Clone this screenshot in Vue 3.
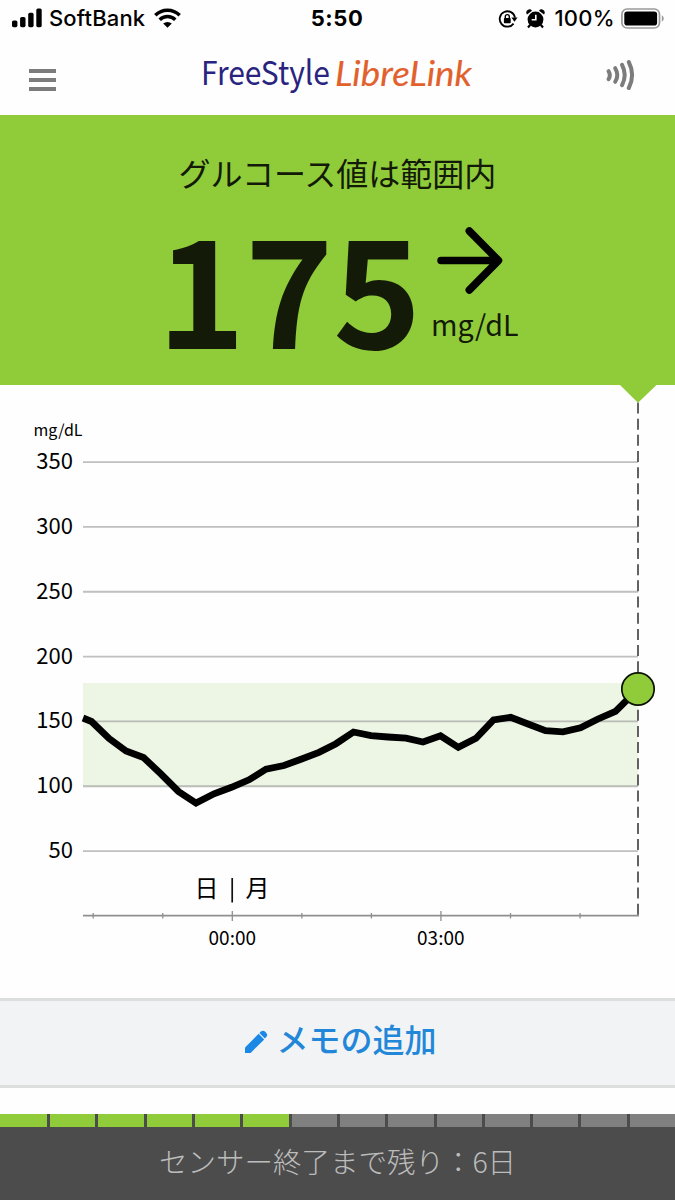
<template>
  <div class="screen">
    <div class="status-bar">
      <div class="status-left">
        <svg class="signal" width="31" height="20" viewBox="0 0 31 20">
          <rect x="0" y="12.5" width="5.4" height="6.7" rx="1.6" />
          <rect x="8.1" y="9" width="5.4" height="10.2" rx="1.6" />
          <rect x="16.2" y="4.8" width="5.4" height="14.4" rx="1.6" />
          <rect x="24.3" y="0.5" width="5.4" height="18.7" rx="1.6" />
        </svg>
        <span class="carrier">SoftBank</span>
        <svg class="wifi" width="27" height="20" viewBox="0 0 27 20">
          <path d="M1.3 7.3a17.2 17.2 0 0 1 24.4 0" />
          <path d="M5.7 11.8a11 11 0 0 1 15.6 0" />
          <path class="dot" d="M9.2 15.6a6.3 6.3 0 0 1 8.6 0L13.5 19.8z" />
        </svg>
      </div>
      <span class="clock">5:50</span>
      <div class="status-right">
        <svg class="lock" width="20" height="20" viewBox="0 0 20 20">
          <path class="ring" d="M15.6 14.6A7.7 7.7 0 1 1 17 8.6" />
          <path d="M13.4 8.5h6.2l-3.1 4.2z" />
          <rect x="5.9" y="9" width="6.8" height="5.2" rx="0.8" />
          <path class="shackle" d="M7.3 9.2V7.6a2 2 0 0 1 4 0v1.6" />
        </svg>
        <svg class="alarm" width="19" height="20" viewBox="0 0 19 20">
          <path d="M1 5.4A3 3 0 0 1 6 1.8zM18 5.4A3 3 0 0 0 13 1.8z" />
          <circle cx="9.5" cy="10.5" r="7.9" />
          <path class="legs" d="M4.3 15.8L2 18.4M14.7 15.8l2.3 2.6" />
          <path class="hands" d="M9.8 5.8v5H5.7" />
        </svg>
        <span class="percent">100%</span>
        <svg class="battery" width="44" height="22" viewBox="0 0 44 22">
          <rect class="shell" x="0.9" y="1" width="37.6" height="19" rx="5.2" />
          <rect x="3.3" y="3.5" width="32.8" height="14" rx="2.8" />
          <path class="cap" d="M40.8 7.2q2 1.2 2 3.3t-2 3.3z" />
        </svg>
      </div>
    </div>

    <header class="header">
      <button class="menu" aria-label="menu">
        <span></span>
        <span></span>
        <span></span>
      </button>
      <svg class="logo" width="280" height="62" viewBox="0 0 280 62">
        <text class="logo-free" x="1" y="44" textLength="129" lengthAdjust="spacingAndGlyphs">FreeStyle</text>
        <text class="logo-libre" x="135" y="44.5" textLength="137" lengthAdjust="spacingAndGlyphs">LibreLink</text>
      </svg>
      <svg class="scan" width="30" height="32" viewBox="0 0 30 32">
        <path d="M2.6 12.2q2.4 4 0 8" />
        <path d="M9.2 9.2q4.2 6.8 0 13.6" />
        <path d="M16 5.8q5.4 10.2 0 20.4" />
        <path d="M22.8 3q6.6 13 0 26" />
      </svg>
    </header>

    <section class="reading">
      <h1 class="message">グルコース値は範囲内</h1>
      <div class="value-row">
        <span class="value">175</span>
        <div class="trend">
          <svg width="66" height="68" viewBox="0 0 66 68">
            <path d="M4 33.5H61M32.3 4L61.5 33.5L32.3 63" />
          </svg>
          <span class="unit">mg/dL</span>
        </div>
      </div>
    </section>

    <svg class="chart" width="675" height="613" viewBox="0 385 675 613">
      <rect class="target" x="83" y="683" width="555" height="103.5" />
      <g v-for="level in levels" :key="level">
        <line class="grid" x1="83" x2="638" :y1="yOf(level)" :y2="yOf(level)" />
        <text class="level" x="73" :y="yOf(level) + 7">{{ level }}</text>
      </g>
      <text class="chart-unit" x="33.5" y="436">mg/dL</text>

      <line class="axis" x1="83" x2="639" y1="915.7" y2="915.7" />
      <line v-for="h in hours" :key="h" class="tick" :x1="xOf(h)" :x2="xOf(h)"
        :y1="h % 3 ? 913 : 911" :y2="h % 3 ? 918.5 : 921" />
      <text class="hour" x="232.3" y="945">00:00</text>
      <text class="hour" x="440.8" y="945">03:00</text>

      <text class="day" x="206.5" y="896.5">日</text>
      <line class="day-line" x1="232.2" x2="232.2" y1="878" y2="902.5" />
      <text class="day" x="257.5" y="896.5">月</text>

      <polyline class="glucose" :points="glucosePoints" />
      <line class="now" x1="638" x2="638" y1="402.5" y2="916" />
      <path class="pointer" d="M620 385H656.5L638 402.8z" />
      <circle class="current" cx="638" cy="689" r="16.2" />
    </svg>

    <button class="note">
      <svg width="24" height="24" viewBox="0 0 24 24">
        <path d="M1 17.4L14.6 3.8L20.2 9.4L6.6 23H1z" />
        <path d="M15.4 3l1.7-1.5q2-1.7 4.1.3l.9.9q2 2.1.3 4.1L20.9 8.5z" />
      </svg>
      <span>メモの追加</span>
    </button>

    <footer class="sensor">
      <div class="days">
        <span v-for="day in 14" :key="day" class="day-block" :class="{ active: day <= daysLeft }"></span>
      </div>
      <p class="sensor-text">センサー終了まで残り：{{ daysLeft }}日</p>
    </footer>
  </div>
</template>

<script setup>
import { computed } from 'vue'

const daysLeft = 6
const levels = [350, 300, 250, 200, 150, 100, 50]
const hours = [-2, -1, 0, 1, 2, 3, 4, 5]

// Trace of the last eight hours, one point every 15 minutes
const readings = [
  [83, 718], [91.5, 721.5], [109, 738.5], [126, 751], [143.5, 757.5], [161, 774],
  [178.5, 791.5], [196, 803], [214, 793.8], [231.5, 787.3], [249, 779.8], [266, 769.2],
  [284, 765.5], [301, 759.3], [319, 752.3], [336, 743.7], [353.5, 732], [371, 735.7],
  [388, 737], [406, 738.2], [423, 742], [440.5, 735.8], [458.3, 747.3], [476, 738.3],
  [493.5, 720], [510.7, 717.3], [528, 724], [545.5, 730.7], [563, 731.8], [580.5, 727.7],
  [598, 719], [615.5, 711.3], [638, 689]
]

const glucosePoints = computed(() => readings.map((p) => p.join(',')).join(' '))

function xOf(hour) {
  return 232.3 + hour * 69.55
}

function yOf(level) {
  return 915.9 - level * 1.2967
}
</script>

<style>
body {
  margin: 0;
  background: #fff;
}
</style>

<style scoped>
.screen {
  width: 675px;
  height: 1200px;
  display: flex;
  flex-direction: column;
  overflow: hidden;
  background: #fefefe;
  color: #000;
  font-family: "Noto Sans CJK JP", sans-serif;
}

button {
  border: 0;
  padding: 0;
  background: none;
  font-family: inherit;
}

.status-bar {
  height: 37px;
  box-sizing: border-box;
  padding: 0 10px 0 12px;
  display: grid;
  grid-template-columns: 1fr auto 1fr;
  align-items: center;
  font-family: Inter, sans-serif;
  font-size: 22px;
  line-height: 37px;
  font-weight: 500;
}

.status-left,
.status-right {
  display: flex;
  align-items: center;
}

.status-right {
  justify-content: flex-end;
}

.signal {
  margin-top: -2px;
}

.carrier {
  margin-left: 6px;
  letter-spacing: 0.15px;
}

.wifi {
  margin-left: 9px;
  margin-top: -1px;
}

.wifi path {
  fill: none;
  stroke: #000;
  stroke-width: 3.4;
}

.wifi .dot {
  fill: #000;
  stroke: none;
}

.clock {
  margin-right: 3px;
  font-weight: 700;
  letter-spacing: 0.6px;
}

.lock .ring,
.lock .shackle {
  fill: none;
  stroke: #000;
  stroke-width: 1.8;
}

.lock .shackle {
  stroke-width: 1.4;
}

.alarm {
  margin-left: 8px;
}

.alarm .legs {
  stroke: #000;
  stroke-width: 2.2;
}

.alarm .hands {
  fill: none;
  stroke: #fff;
  stroke-width: 1.6;
}

.percent {
  margin-left: 9px;
  margin-right: 6px;
  letter-spacing: 0.3px;
}

.battery .shell {
  fill: none;
  stroke: #999;
  stroke-width: 1.7;
}

.battery .cap {
  fill: #999;
}

.header {
  height: 78px;
  box-sizing: border-box;
  padding: 0 39px 0 29px;
  display: flex;
  align-items: flex-start;
}

.menu {
  width: 27px;
  margin-top: 32px;
  display: flex;
  flex-direction: column;
  gap: 5.5px;
}

.menu span {
  height: 3.5px;
  background: #7c7c7c;
}

.logo {
  margin-left: 144px;
  margin-top: 4px;
}

.logo-free {
  font-size: 33px;
  fill: #29247f;
}

.logo-libre {
  font-family: Lato, sans-serif;
  font-size: 34px;
  font-style: italic;
  fill: #e2602c;
  stroke: #e2602c;
  stroke-width: 0.15;
}

.scan {
  margin-left: auto;
  margin-top: 22px;
}

.scan path {
  fill: none;
  stroke: #7c7c7c;
  stroke-width: 4;
  stroke-linecap: round;
}

.reading {
  height: 270px;
  background: #90cc3a;
  color: #131a08;
}

.message {
  margin: 0;
  padding-top: 33px;
  font-size: 32px;
  line-height: 48px;
  font-weight: 400;
  text-align: center;
}

.value-row {
  display: flex;
  padding-left: 157px;
}

.value {
  width: 274px;
  flex: none;
  box-sizing: border-box;
  font-size: 150px;
  line-height: 175px;
  letter-spacing: -0.5px;
  font-weight: 700;
}

.trend {
  display: flex;
  flex-direction: column;
  padding-top: 31px;
}

.trend svg {
  margin-left: 6px;
}

.trend path {
  fill: none;
  stroke: #000;
  stroke-width: 7.5;
  stroke-linecap: round;
  stroke-linejoin: round;
}

.unit {
  margin-top: 8px;
  font-size: 28.6px;
  line-height: 42px;
}

.chart {
  flex: none;
  display: block;
}

.target {
  fill: #edf6e5;
}

.grid {
  stroke: #8c8c8c;
  stroke-opacity: 0.55;
  stroke-width: 1.8;
}

.level {
  font-size: 22px;
  text-anchor: end;
}

.chart-unit {
  font-size: 16px;
}

.axis {
  stroke: #8f8f8f;
  stroke-width: 1.7;
}

.tick {
  stroke: #8f8f8f;
  stroke-width: 1.3;
}

.hour {
  font-size: 19px;
  text-anchor: middle;
}

.day {
  font-size: 24px;
  text-anchor: middle;
}

.day-line {
  stroke: #111;
  stroke-width: 1.7;
}

.glucose {
  fill: none;
  stroke: #000;
  stroke-width: 6.8;
}

.now {
  stroke: #626262;
  stroke-width: 2;
  stroke-dasharray: 11 5.17;
}

.pointer {
  fill: #90cc3a;
}

.current {
  fill: #90cc3a;
  stroke: #0b1003;
  stroke-width: 1.7;
}

.note {
  flex: none;
  height: 90px;
  box-sizing: border-box;
  padding-left: 6px;
  border-top: 3px solid #dcdddd;
  border-bottom: 3px solid #dcdddd;
  background: #f1f3f5;
  color: #2287d8;
  display: flex;
  align-items: center;
  justify-content: center;
  gap: 8px;
}

.note svg {
  margin-top: -3px;
}

.note svg path {
  fill: #1b88e5;
}

.note span {
  margin-top: -11px;
  font-size: 32px;
  line-height: 46px;
  font-weight: 500;
}

.sensor {
  margin-top: auto;
  height: 86px;
  background: #4c4c4c;
}

.days {
  height: 12.5px;
  display: flex;
  gap: 3px;
}

.day-block {
  flex: 1;
  background: #808080;
}

.day-block:first-child {
  flex: 0 0 47px;
}

.day-block.active {
  background: #90cc3a;
}

.sensor-text {
  margin: 0;
  padding-top: 13.5px;
  font-size: 28.5px;
  line-height: 42px;
  font-weight: 300;
  text-align: center;
  color: #bcbcbc;
}
</style>
